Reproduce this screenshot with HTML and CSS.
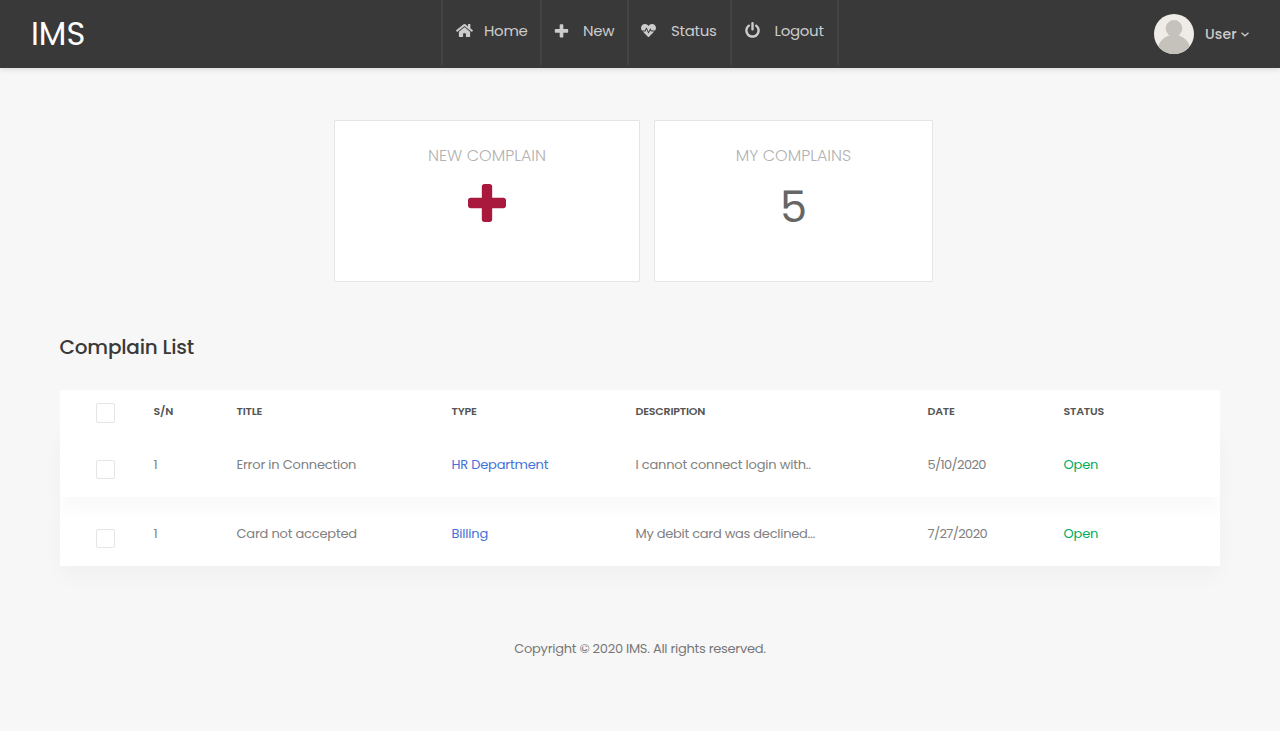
FILE: index.html
```html
<!DOCTYPE html>
<html lang="en">
<head>
<meta charset="utf-8">
<title>IMS</title>
<link rel="stylesheet" href="styles.css">
</head>
<body>
<header class="header">
  <div class="logo"><span>IMS</span></div>
  <nav class="nav">
    <a class="nav-item nav-home"><svg class="icon" viewBox="0 0 576 512"><path d="M280.37 148.26L96 300.11V464a16 16 0 0 0 16 16l112.06-.29a16 16 0 0 0 15.92-16V368a16 16 0 0 1 16-16h64a16 16 0 0 1 16 16v95.64a16 16 0 0 0 16 16.05L464 480a16 16 0 0 0 16-16V300L295.67 148.26a12.19 12.19 0 0 0-15.3 0zM571.6 251.47L488 182.56V44.05a12 12 0 0 0-12-12h-56a12 12 0 0 0-12 12v72.61L318.47 43a48 48 0 0 0-61 0L4.34 251.47a12 12 0 0 0-1.6 16.9l25.5 31A12 12 0 0 0 45.15 301l235.22-193.74a12.19 12.19 0 0 1 15.3 0L530.9 301a12 12 0 0 0 16.9-1.6l25.5-31a12 12 0 0 0-1.7-16.93z"/></svg><span>Home</span></a>
    <a class="nav-item nav-new"><svg class="icon" viewBox="0 0 1792 1792"><path d="M1600 736v192q0 40-28 68t-68 28h-416v416q0 40-28 68t-68 28h-192q-40 0-68-28t-28-68v-416h-416q-40 0-68-28t-28-68v-192q0-40 28-68t68-28h416v-416q0-40 28-68t68-28h192q40 0 68 28t28 68v416h416q40 0 68 28t28 68z"/></svg><span>New</span></a>
    <a class="nav-item nav-status"><svg class="icon" viewBox="0 0 512 512"><path d="M320.2 243.8l-49.7 99.4c-6 12.1-23.4 11.7-28.9-.6l-56.9-126.3-30 71.7H60.6l182.5 186.5c7.1 7.3 18.6 7.3 25.7 0L451.4 288H342.3l-22.1-44.2zM473.7 73.9l-2.4-2.5c-51.5-52.6-135.8-52.6-187.4 0L256 100l-27.9-28.5c-51.5-52.7-135.9-52.7-187.4 0l-2.4 2.4C-10.4 123.7-12.5 203 31 256h102.4l35.9-86.2c5.4-12.9 23.6-13.2 29.4-.4l58.2 129.3 49-97.9c5.9-11.8 22.7-11.8 28.6 0l27.6 55.2H481c43.5-53 41.4-132.3-7.3-182.1z"/></svg><span>Status</span></a>
    <a class="nav-item nav-logout"><svg class="icon" viewBox="0 0 1792 1792"><path d="M1664 896q0 156-61 298t-164 245-245 164-298 61-298-61-245-164-164-245-61-298q0-182 80.5-343t226.5-270q43-32 95.5-25t83.5 50q32 42 24.5 94.5t-49.5 84.5q-98 74-151.5 181t-53.5 228q0 104 40.5 198.5t109.5 163.5 163.5 109.5 198.5 40.5 198.5-40.5 163.5-109.5 109.5-163.5 40.5-198.5q0-121-53.5-228t-151.5-181q-42-32-49.5-84.5t24.5-94.5q31-43 84-50t95 25q146 109 226.5 270t80.5 343zm-640-768v640q0 52-38 90t-90 38-90-38-38-90v-640q0-52 38-90t90-38 90 38 38 90z"/></svg><span>Logout</span></a>
  </nav>
  <div class="account">
    <svg class="avatar" viewBox="0 0 40 40"><defs><clipPath id="round"><circle cx="20" cy="20" r="20"/></clipPath></defs><g clip-path="url(#round)"><rect width="40" height="40" fill="#efece7"/><circle cx="20" cy="14.3" r="8.3" fill="#c5c2bc"/><ellipse cx="20" cy="37" rx="16.5" ry="16.2" fill="#c5c2bc"/></g></svg>
    <span class="account-name">User</span>
    <svg class="chevron" viewBox="0 0 8 5"><path d="M.5 .8l3.5 3 3.5-3" fill="none" stroke="#ccc" stroke-width="1.3"/></svg>
  </div>
</header>
<main class="main">
  <section class="cards">
    <div class="card card-new">
      <h3 class="card-title">NEW COMPLAIN</h3>
      <svg class="card-plus" viewBox="192 128 1408 1408"><path d="M1600 736v192q0 40-28 68t-68 28h-416v416q0 40-28 68t-68 28h-192q-40 0-68-28t-28-68v-416h-416q-40 0-68-28t-28-68v-192q0-40 28-68t68-28h416v-416q0-40 28-68t68-28h192q40 0 68 28t28 68v416h416q40 0 68 28t28 68z"/></svg>
    </div>
    <div class="card card-mine">
      <h3 class="card-title">MY COMPLAINS</h3>
      <div class="card-count">5</div>
    </div>
  </section>
  <h2 class="heading"><span>Complain List</span></h2>
  <div class="table">
    <div class="row row-head">
      <i class="check"></i><span>S/N</span><span>TITLE</span><span>TYPE</span><span>DESCRIPTION</span><span>DATE</span><span>STATUS</span>
    </div>
    <div class="row row-body row-first">
      <i class="check"></i><span>1</span><span>Error in Connection</span><span class="type">HR Department</span><span>I cannot connect login with..</span><span class="date">5/10/2020</span><span class="open">Open</span>
    </div>
    <div class="row row-body">
      <i class="check"></i><span>1</span><span>Card not accepted</span><span class="type">Billing</span><span class="desc-long">My debit card was declined...</span><span class="date">7/27/2020</span><span class="open">Open</span>
    </div>
  </div>
  <footer class="footer"><span>Copyright © 2020 IMS. All rights reserved.</span></footer>
</main>
</body>
</html>
```
FILE: styles.css
```css
* { box-sizing: border-box; }
body {
  margin: 0;
  min-height: 731px;
  background: #f7f7f7;
  color: #808080;
  font-family: Poppins, Inter, "Open Sans", sans-serif;
  font-size: 13px;
}
.header {
  display: grid;
  grid-template-columns: 441px 398px 1fr;
  height: 68px;
  background: #393939;
  box-shadow: 0 2px 5px rgba(0, 0, 0, .1);
}
.logo { padding: 14px 0 0 31px; font-size: 32px; line-height: 39px; color: #fff; }
.nav { display: flex; height: 65px; border-right: 2px solid #444; }
.nav-item {
  display: flex;
  align-items: flex-start;
  padding: 22px 0 0 12px;
  border-left: 2px solid #444;
  color: #ccc;
  font-size: 15px;
  line-height: 18px;
  letter-spacing: -.3px;
}
.nav-home { width: 99px; }
.nav-new { width: 87px; }
.nav-status { width: 103px; }
.nav-logout { width: 107px; }
.icon { width: 17px; height: 17px; margin-right: 12px; flex: none; fill: #ccc; }
.nav-home .icon { height: 15px; margin: 1px 11.5px 0 .5px; }
.nav-new .icon { margin: 1px 13px 0 -1px; }
.nav-status .icon { width: 15px; height: 15px; margin: 1px 15px 0 0; }
.nav-logout .icon { margin: 0 13.5px 0 0; }
.account { display: flex; align-items: center; justify-content: flex-end; padding-right: 31px; color: #ccc; }
.avatar { width: 40px; height: 40px; margin-right: 11px; }
.account-name { font-size: 14px; font-weight: 500; letter-spacing: .2px; width: 32px; white-space: nowrap; }
.chevron { width: 8px; height: 5px; margin-left: 4px; }
.cards { display: flex; gap: 14px; padding: 52px 0 0 334px; }
.card {
  display: flex;
  flex-direction: column;
  align-items: center;
  height: 162px;
  padding-top: 25px;
  background: #fff;
  border: 1px solid #e5e5e5;
  border-radius: 1px;
}
.card-new { width: 306px; }
.card-mine { width: 279px; }
.card-title { margin: 0; font-size: 16px; line-height: 20px; font-weight: 300; color: #b2b2b2; white-space: nowrap; }
.card-plus { width: 38px; height: 38px; margin-top: 18px; fill: #a8193d; }
.card-count { margin-top: 15px; font-size: 43px; line-height: 52px; color: #666; }
.heading { margin: 52px 0 0 59.5px; font-size: 20px; line-height: 26px; font-weight: 500; letter-spacing: -.2px; color: #393939; }
.table { width: 1160px; margin: 30px 0 0 60px; background: #fff; }
.row {
  display: grid;
  grid-template-columns: 57.5px 83px 215px 184px 292px 136px 1fr;
  padding-left: 36px;
  white-space: nowrap;
  line-height: 18px;
  letter-spacing: -.2px;
}
.row-head { height: 38px; padding-top: 12px; font-size: 11px; font-weight: 600; color: #555; }
.row-body { height: 69px; padding-top: 28px; background: #fff; box-shadow: 0 10px 20px rgba(0, 0, 0, .03); }
.row-first { position: relative; z-index: 1; }
.check { width: 19px; height: 20px; border: 1px solid #e5e5e5; border-radius: 2px; background: #fff; }
.row-head .check { margin-top: 1px; }
.row-body .check { height: 19px; margin-top: 4px; }
.type { color: #4272d7; }
.desc-long { letter-spacing: -.26px; }
.date { letter-spacing: -.65px; }
.open { color: #00ad5f; letter-spacing: -.15px; }
.footer { margin-top: 74px; text-align: center; line-height: 18px; letter-spacing: -.27px; color: #777; }
```
